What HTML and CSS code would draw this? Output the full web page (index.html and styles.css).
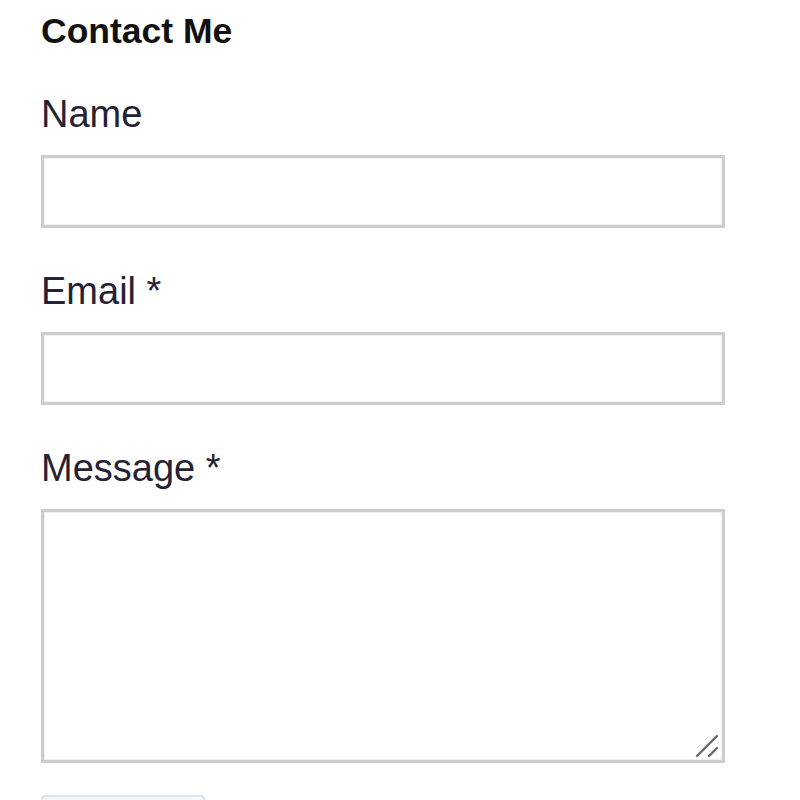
FILE: index.html
```html
<!DOCTYPE html>
<html>
<head>
<meta charset="utf-8">
<link rel="stylesheet" href="styles.css">
</head>
<body>
<form class="contact">
  <h2 class="title">Contact Me</h2>
  <div class="field">
    <label class="label">Name</label>
    <input class="input" type="text">
  </div>
  <div class="field">
    <label class="label">Email *</label>
    <input class="input" type="text">
  </div>
  <div class="field">
    <label class="label">Message *</label>
    <div class="area-wrap">
      <textarea class="area"></textarea>
      <svg class="grip" width="24" height="24" viewBox="0 0 24 24">
        <line x1="2" y1="22" x2="22" y2="2" stroke="#6a6a6a" stroke-width="2.4" stroke-linecap="round"/>
        <line x1="14" y1="22" x2="22" y2="14" stroke="#6a6a6a" stroke-width="2.4" stroke-linecap="round"/>
      </svg>
    </div>
  </div>
  <button class="send" type="button"><span class="send-text">Send</span></button>
</form>
</body>
</html>
```

FILE: styles.css
```css
html, body {
  margin: 0;
  padding: 0;
  background: #ffffff;
}
body {
  font-family: "Liberation Sans", Arial, sans-serif;
  color: #222222;
  overflow: hidden;
  height: 800px;
}
.contact {
  width: 684px;
  margin-left: 41px;
  display: flex;
  flex-direction: column;
}
.title {
  margin: 11px 0 0 0;
  font-size: 35.5px;
  line-height: 40px;
  font-weight: bold;
  color: #111111;
}
.field {
  display: flex;
  flex-direction: column;
  margin-top: 41px;
}
.label {
  font-size: 38px;
  line-height: 44px;
  color: #262233;
  margin-bottom: 19px;
}
.input,
.area {
  box-sizing: border-box;
  width: 684px;
  margin: 0;
  padding: 0;
  border: 3px solid #cdcdcd;
  border-radius: 0;
  box-shadow: inset 0 0 0 1px #f0f0f0;
  background: #ffffff;
  outline: none;
  font: inherit;
}
.input {
  height: 73px;
}
.area-wrap {
  position: relative;
  width: 684px;
  height: 254px;
}
.area {
  display: block;
  height: 254px;
  resize: none;
}
.grip {
  position: absolute;
  right: 6px;
  bottom: 5px;
}
.send {
  align-self: flex-start;
  margin-top: 32px;
  width: 164px;
  height: 70px;
  padding: 24px 0 0 0;
  border: 2px solid #dde3ec;
  border-radius: 4px;
  background: #f7f8fa;
  font-family: "Liberation Sans", Arial, sans-serif;
  font-size: 32px;
  line-height: 36px;
  color: #333333;
}
.send-text {
  display: block;
}
```
